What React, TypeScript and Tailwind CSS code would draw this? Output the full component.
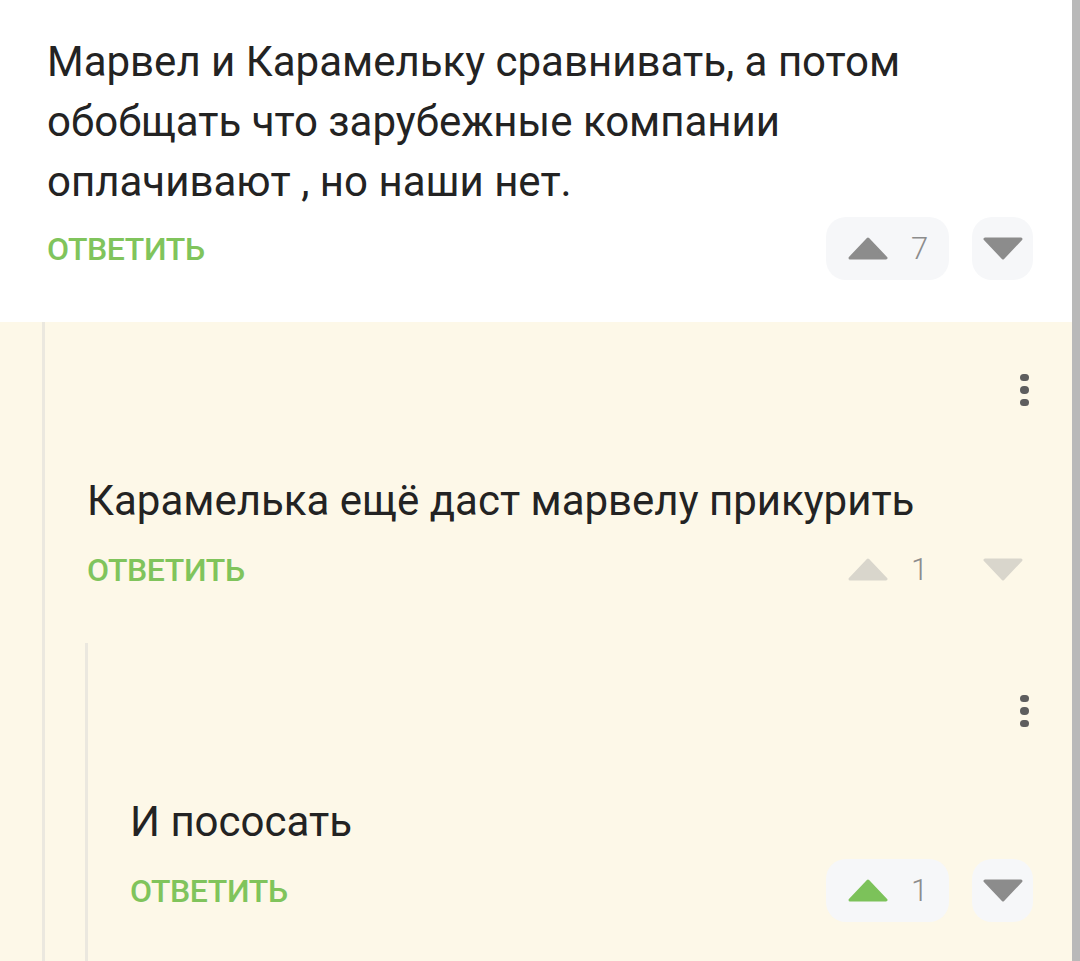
import React from "react";

type Vote = "none" | "up";

interface CommentData {
  text: string;
  score: number;
  vote: Vote;
  framed: boolean;
  dimmed?: boolean;
}

function Triangle({ up, color }: { up: boolean; color: string }) {
  return (
    <svg width="40" height="23" viewBox="0 0 40 23" className="block">
      <polygon
        points={up ? "20,2 38,21 2,21" : "2,2 38,2 20,21"}
        fill={color}
        stroke={color}
        strokeWidth="3"
        strokeLinejoin="round"
      />
    </svg>
  );
}

function Actions({ score, vote, framed, dimmed }: Omit<CommentData, "text">) {
  const base = dimmed ? "#d9d6cc" : "#8c8c8c";
  const upColor = vote === "up" ? "#7cc25a" : base;
  const pill = framed ? "bg-[#f6f7f9]" : "";
  return (
    <div className="flex items-center justify-between h-[63px]">
      <span className="text-[32px] font-medium text-[#80c45c] tracking-[-0.4px] leading-none">
        ОТВЕТИТЬ
      </span>
      <div className="flex items-center gap-[23px]">
        <div className={`flex items-center h-[63px] w-[123px] pl-[22px] rounded-[20px] ${pill}`}>
          <Triangle up color={upColor} />
          <span className="ml-[23px] text-[31px] font-light text-[#8c8c8c] leading-none">
            {score}
          </span>
        </div>
        <div className={`flex items-center justify-center h-[63px] w-[61px] rounded-[20px] ${pill}`}>
          <Triangle up={false} color={base} />
        </div>
      </div>
    </div>
  );
}

function Dots() {
  return (
    <div className="flex justify-end pr-[43px] pt-[52px] h-[84px]">
      <div className="flex flex-col items-center justify-center gap-[5px] h-[32px]">
        <span className="block w-[9px] h-[9px] rounded-full bg-[#5e5e5e]" />
        <span className="block w-[9px] h-[9px] rounded-full bg-[#5e5e5e]" />
        <span className="block w-[9px] h-[9px] rounded-full bg-[#5e5e5e]" />
      </div>
    </div>
  );
}

function Thread({ comment, children }: { comment: CommentData; children?: React.ReactNode }) {
  return (
    <div className="flex">
      <div className="w-[3px] shrink-0 bg-[#ebe8df]" />
      <div className="flex-1 pb-[60px]">
        <Dots />
        <div className="pl-[42px] pr-[39px] mt-[65px]">
          <p className="text-[42px] leading-[60px] text-[#232323]">{comment.text}</p>
          <div className="mt-[7px]">
            <Actions {...comment} />
          </div>
        </div>
        {children ? <div className="mt-[42px] ml-[40px]">{children}</div> : null}
      </div>
    </div>
  );
}

export default function App() {
  return (
    <div
      className="flex w-[1080px] h-[961px] overflow-hidden"
      style={{ fontFamily: "Roboto, 'Noto Sans', sans-serif" }}
    >
      <div className="flex-1 flex flex-col bg-[#fdf8e8]">
        <div className="bg-white pl-[47px] pr-[39px] pt-[32px] pb-[42px]">
          <p className="text-[42px] leading-[60px] text-[#232323] pr-[120px]">
            Марвел и Карамельку сравнивать, а потом обобщать что зарубежные компании
            оплачивают , но наши нет.
          </p>
          <div className="mt-[5px]">
            <Actions score={7} vote="none" framed />
          </div>
        </div>
        <div className="ml-[42px] flex-1">
          <Thread
            comment={{
              text: "Карамелька ещё даст марвелу прикурить",
              score: 1,
              vote: "none",
              framed: false,
              dimmed: true,
            }}
          >
            <Thread
              comment={{ text: "И пососать", score: 1, vote: "up", framed: true }}
            />
          </Thread>
        </div>
      </div>
      <div className="w-[8px] shrink-0 bg-[#b9b9b9]" />
    </div>
  );
}
